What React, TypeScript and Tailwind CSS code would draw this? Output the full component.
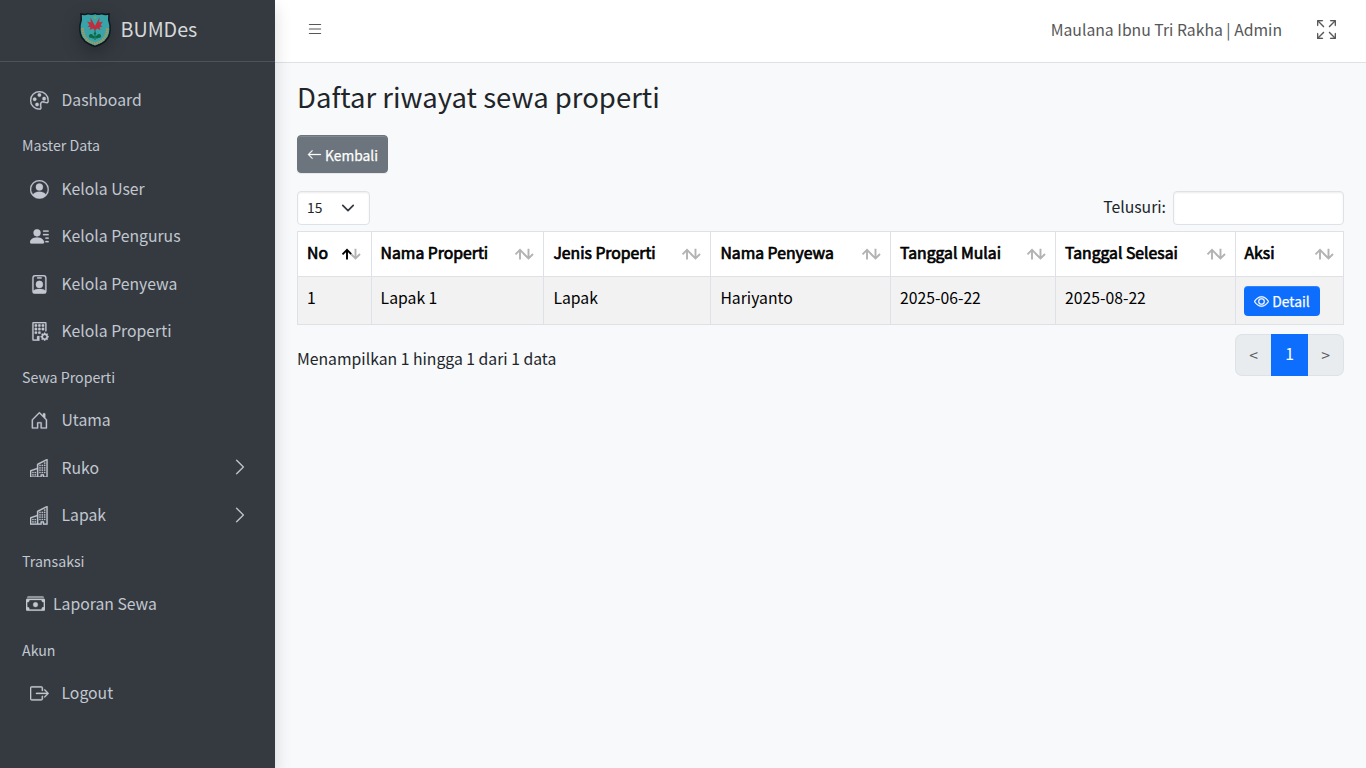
import type { ReactNode } from "react";
import type { IconType } from "react-icons";
import {
  BsArrowLeft,
  BsArrowsFullscreen,
  BsBoxArrowRight,
  BsBuildingGear,
  BsBuildings,
  BsCashStack,
  BsChevronRight,
  BsEye,
  BsHouseDoor,
  BsList,
  BsPalette,
  BsPersonBadge,
  BsPersonCircle,
  BsPersonLinesFill,
} from "react-icons/bs";

function Logo() {
  return (
    <svg viewBox="0 0 34 36" className="mb-[2px] h-9 w-[34px] drop-shadow-[0_6px_8px_rgba(0,0,0,0.25)]">
      <path
        d="M3 2 Q7 3 10 1.600 Q14 3 17 1.400 Q20 3 24 1.600 Q27 3 31 2 Q30 8 32 13 Q32.500 18 31.500 22 Q30 30 17 34.500 Q4 30 2.500 22 Q1.500 18 2 13 Q4 8 3 2Z"
        fill="#38a3a8"
        stroke="#10161a"
        strokeWidth="1.500"
      />
      <path d="M4.500 16 Q5 29 17 31.500 Q29 29 29.500 16" fill="none" stroke="#a09a62" strokeWidth="2.800" strokeDasharray="1.600 0.700" />
      <path d="M15 5.500 L17 4 L19 5.500 L17 7.500Z" fill="#6aa66c" />
      <path
        d="M12.500 5.500 L16 12 L17 14 L18 12 L21.500 5.500 L21.300 10.500 L25 9.500 L22.500 13 L24.500 14.500 L21.500 15.300 L22.500 18 L19 16.500 L17 18.500 L15 16.500 L11.500 18 L12.500 15.300 L9.500 14.500 L11.500 13 L9 9.500 L12.700 10.500Z"
        fill="#bd2f3d"
      />
      <path d="M16.500 18 H17.500 V28 H16.500Z" fill="#12665b" />
      <circle cx="13" cy="24" r="2.100" fill="#0b6b45" />
      <circle cx="21" cy="24" r="2.100" fill="#0b6b45" />
      <circle cx="15.200" cy="25" r="1.600" fill="#0b6b45" />
      <circle cx="18.800" cy="25" r="1.600" fill="#0b6b45" />
      <circle cx="17" cy="21.500" r="1.200" fill="#0b6b45" />
    </svg>
  );
}

function NavHeader({ children }: { children: ReactNode }) {
  return <li className="flex h-[41.7px] items-center pl-[22px] pt-[2.2px] text-[14.2px] leading-5 nth-2:pt-[1.4px]">{children}</li>;
}

function NavItem({ icon: Icon, label, arrow, tight }: { icon: IconType; label: string; arrow?: boolean; tight?: boolean }) {
  return (
    <li className={tight ? "flex h-[47.4px] items-center pl-[26px] pr-[26px]" : "flex h-[47.4px] items-center pl-[30.2px] pr-[26px]"}>
      <Icon strokeWidth={0.25} className={tight ? "mb-[2px] size-[19px] shrink-0" : "mt-[0.6px] size-[18.8px] shrink-0"} />
      <span className={tight ? "ml-2 text-[15.76px] leading-6" : "ml-[12.5px] text-[15.76px] leading-6"}>{label}</span>
      {arrow && <BsChevronRight strokeWidth={0.2} className="mb-px ml-auto size-[18px]" />}
    </li>
  );
}

function SortIcon({ active }: { active?: boolean }) {
  return (
    <svg viewBox="0 0 20 14" className="h-[14px] w-5 shrink-0" fill="none" strokeWidth="1.900">
      <path d="M6 12.500 V3 M1.500 7.300 L6 2.800 L10.500 7.300" stroke={active ? "#000" : "#b3b3b3"} />
      <path d="M14.500 1.800 V11.200 M10 7 L14.500 11.500 L19 7" stroke="#b3b3b3" />
    </svg>
  );
}

const columns = [
  { label: "No", box: "w-[74px] pl-[9px] pr-[10px]" },
  { label: "Nama Properti", box: "w-[172px] pl-[8.6px] pr-[9px]" },
  { label: "Jenis Properti", box: "w-[167px] pl-[9.4px] pr-[9px]" },
  { label: "Nama Penyewa", box: "w-[180px] pl-[9.4px] pr-[9px]" },
  { label: "Tanggal Mulai", box: "w-[165px] pl-[9px] pr-[9px]" },
  { label: "Tanggal Selesai", box: "w-[180px] pl-[9px] pr-[9px]" },
  { label: "Aksi", box: "w-[108px] pl-[8.5px] pr-[9px]" },
];

const row = [
  { value: "1", pad: "pl-[9px]" },
  { value: "Lapak 1", pad: "pl-[8.6px]" },
  { value: "Lapak", pad: "pl-[9.4px]" },
  { value: "Hariyanto", pad: "pl-[9.4px]" },
  { value: "2025-06-22", pad: "pl-[9px]" },
  { value: "2025-08-22", pad: "pl-[9px]" },
];

export default function App() {
  return (
    <div className="flex h-screen w-full overflow-hidden bg-[#f8f9fb] font-['Noto_Sans_CJK_SC','Noto_Sans',sans-serif] text-[15.76px] leading-6 text-[#212529]">
      <aside className="relative z-10 w-[275px] shrink-0 bg-[#343a40] text-[#c2c7d0] shadow-[0_8px_16px_rgba(0,0,0,0.15)]">
        <div className="flex h-[62px] items-center border-b border-[#4b545c] pl-[78px]">
          <Logo />
          <span className="mb-[3px] ml-[8.5px] text-[19.7px] leading-7 text-[#d6d8da]">BUMDes</span>
        </div>
        <ul className="pt-[14.3px]">
          <NavItem icon={BsPalette} label="Dashboard" />
          <NavHeader>Master Data</NavHeader>
          <NavItem icon={BsPersonCircle} label="Kelola User" />
          <NavItem icon={BsPersonLinesFill} label="Kelola Pengurus" />
          <NavItem icon={BsPersonBadge} label="Kelola Penyewa" />
          <NavItem icon={BsBuildingGear} label="Kelola Properti" />
          <NavHeader>Sewa Properti</NavHeader>
          <NavItem icon={BsHouseDoor} label="Utama" />
          <NavItem icon={BsBuildings} label="Ruko" arrow />
          <NavItem icon={BsBuildings} label="Lapak" arrow />
          <NavHeader>Transaksi</NavHeader>
          <NavItem icon={BsCashStack} label="Laporan Sewa" tight />
          <NavHeader>Akun</NavHeader>
          <NavItem icon={BsBoxArrowRight} label="Logout" />
        </ul>
      </aside>

      <div className="min-w-0 flex-1">
        <header className="flex h-[63px] items-center border-b border-[#dee2e6] bg-white pl-[31px] pr-[30px] text-[#565758]">
          <BsList className="mb-[5px] size-[18px]" />
          <span className="mb-[2px] ml-auto">Maulana Ibnu Tri Rakha | Admin</span>
          <BsArrowsFullscreen strokeWidth={0.2} className="mb-[4px] ml-[35px] size-[19px]" />
        </header>

        <main className="pl-[22px] pr-[22px] pt-[14px]">
          <h3 className="text-[27.5px] leading-[38px]">Daftar riwayat sewa properti</h3>
          <button className="mt-5 flex h-[38px] w-[91px] items-center justify-center gap-[3px] rounded-[4px] border border-[#6c757d] bg-[#6c757d] text-[13.8px] leading-5 text-white shadow-[inset_0_1px_0_rgba(255,255,255,0.15),0_1px_1px_rgba(0,0,0,0.075)] [-webkit-text-stroke:0.25px_#fff]">
            <BsArrowLeft strokeWidth={0.3} className="size-[15px]" />
            <span className="pt-[2px]">Kembali</span>
          </button>

          <div className="mt-[18px] flex h-[34px] items-center">
            <div className="flex h-[34px] w-[73px] items-center justify-between rounded-[4px] border border-[#dee2e6] bg-white pl-[9px] pr-[14px] text-[13.8px] shadow-[inset_0_1px_2px_rgba(0,0,0,0.075)]">
              <span className="mb-[3px]">15</span>
              <svg viewBox="0 0 16 16" className="mb-px size-[14px]" fill="none" stroke="#343a40" strokeWidth="2" strokeLinecap="round" strokeLinejoin="round">
                <path d="m2 5 6 6 6-6" />
              </svg>
            </div>
            <label className="mb-[2px] ml-auto mr-[7px]">Telusuri:</label>
            <input aria-label="Telusuri" className="h-[34px] w-[171px] rounded-[4px] border border-[#dee2e6] bg-white shadow-[inset_0_1px_2px_rgba(0,0,0,0.075)]" />
          </div>

          <table className="mt-[6px] w-[1047px] table-fixed border-separate border-spacing-0 border-l border-t border-[#dee2e6] text-black">
            <thead>
              <tr className="h-[45px] bg-white">
                {columns.map((c, i) => (
                  <th key={c.label} className={`${c.box} border-b border-r border-[#dee2e6] py-0 text-left font-normal`}>
                    <div className="flex items-center justify-between whitespace-nowrap">
                      <span className="mb-[2px] [-webkit-text-stroke:0.7px_#000]">{c.label}</span>
                      <SortIcon active={i === 0} />
                    </div>
                  </th>
                ))}
              </tr>
            </thead>
            <tbody>
              <tr className="h-12 bg-[#f2f2f2]">
                {row.map((cell) => (
                  <td key={cell.value} className={`${cell.pad} border-b border-r border-[#dee2e6] pt-[9px] align-top`}>
                    {cell.value}
                  </td>
                ))}
                <td className="border-b border-r border-[#dee2e6] p-0 pl-2 pt-[9px] align-top">
                  <button className="flex h-[30px] w-[76px] items-center justify-center gap-[3px] rounded-[4px] bg-[#0d6efd] text-[13.8px] leading-5 text-white shadow-[inset_0_1px_0_rgba(255,255,255,0.15)] [-webkit-text-stroke:0.25px_#fff]">
                    <BsEye strokeWidth={0.3} className="size-[15px]" />
                    <span>Detail</span>
                  </button>
                </td>
              </tr>
            </tbody>
          </table>

          <div className="mt-[9px] flex h-[42px] items-center justify-between">
            <span className="pt-2">Menampilkan 1 hingga 1 dari 1 data</span>
            <div className="flex h-[42px] text-center leading-10">
              <span className="w-[36px] rounded-l-[7px] border border-r-0 border-[#dee2e6] bg-[#e9ecef] text-[#595c5f]">&lt;</span>
              <span className="w-[37px] bg-[#0d6efd] text-white">1</span>
              <span className="w-[36px] rounded-r-[7px] border border-l-0 border-[#dee2e6] bg-[#e9ecef] text-[#595c5f]">&gt;</span>
            </div>
          </div>
        </main>
      </div>
    </div>
  );
}
